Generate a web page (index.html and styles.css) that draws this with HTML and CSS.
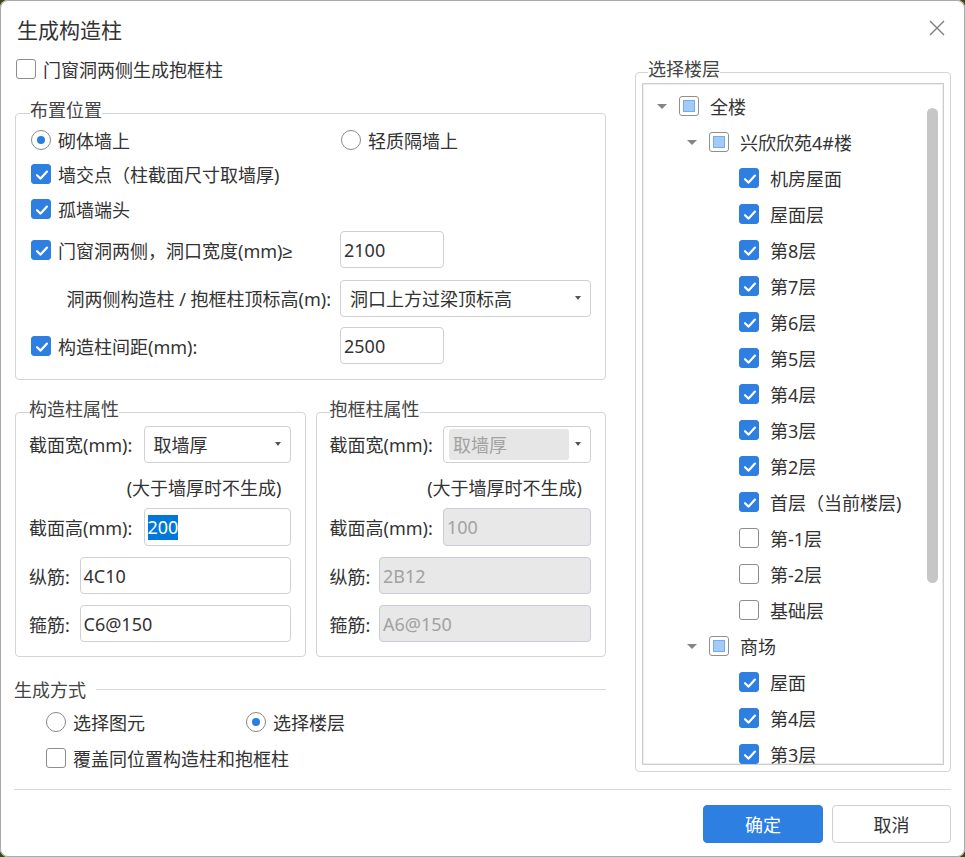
FILE: index.html
```html
<!DOCTYPE html>
<html lang="zh-CN">
<head>
<meta charset="utf-8">
<title>生成构造柱</title>
<link rel="stylesheet" href="styles.css">
</head>
<body>
<div class="dialog">
  <header class="titlebar">
    <h1 class="title">生成构造柱</h1>
    <span class="close"><svg width="16" height="16" viewBox="0 0 16 16"><path d="M1 1L15 15M15 1L1 15" stroke="#7d7d7d" stroke-width="1.4" fill="none"/></svg></span>
  </header>

  <div class="content">
    <div class="left">
      <div class="opt top-check"><span class="cb"></span><span>门窗洞两侧生成抱框柱</span></div>

      <fieldset class="group place">
        <legend>布置位置</legend>
        <div class="place-grid">
          <div class="opt"><span class="radio on"></span><span>砌体墙上</span></div>
          <div class="opt"><span class="radio"></span><span>轻质隔墙上</span></div>

          <div class="opt span2"><span class="cb on"><svg viewBox="0 0 20 20"><path d="M5 10.2L8.6 13.6L15 6.6"/></svg></span><span>墙交点（柱截面尺寸取墙厚)</span></div>

          <div class="opt span2"><span class="cb on"><svg viewBox="0 0 20 20"><path d="M5 10.2L8.6 13.6L15 6.6"/></svg></span><span>孤墙端头</span></div>

          <div class="opt"><span class="cb on"><svg viewBox="0 0 20 20"><path d="M5 10.2L8.6 13.6L15 6.6"/></svg></span><span>门窗洞两侧，洞口宽度(mm)<span class="ge">≥</span></span></div>
          <div class="field w-104">2100</div>

          <div class="rlabel">洞两侧构造柱 / 抱框柱顶标高(m):</div>
          <div class="select"><span>洞口上方过梁顶标高</span><span class="caret"></span></div>

          <div class="opt"><span class="cb on"><svg viewBox="0 0 20 20"><path d="M5 10.2L8.6 13.6L15 6.6"/></svg></span><span>构造柱间距(mm):</span></div>
          <div class="field w-104">2500</div>
        </div>
      </fieldset>

      <div class="props">
        <fieldset class="group prop">
          <legend>构造柱属性</legend>
          <div class="prow r-first"><span>截面宽(mm):</span><div class="select w-147"><span>取墙厚</span><span class="caret"></span></div></div>
          <div class="note">(大于墙厚时不生成)</div>
          <div class="prow r-mid"><span>截面高(mm):</span><div class="field w-147"><span class="sel">200</span></div></div>
          <div class="prow r-next"><span>纵筋:</span><div class="field w-211">4C10</div></div>
          <div class="prow r-next"><span>箍筋:</span><div class="field w-211">C6@150</div></div>
        </fieldset>
        <fieldset class="group prop">
          <legend>抱框柱属性</legend>
          <div class="prow r-first"><span>截面宽(mm):</span><div class="select disabled w-148"><span class="select-value">取墙厚</span><span class="caret"></span></div></div>
          <div class="note">(大于墙厚时不生成)</div>
          <div class="prow r-mid"><span>截面高(mm):</span><div class="field disabled w-148">100</div></div>
          <div class="prow r-next"><span>纵筋:</span><div class="field disabled w-212">2B12</div></div>
          <div class="prow r-next"><span>箍筋:</span><div class="field disabled w-212">A6@150</div></div>
        </fieldset>
      </div>

      <div class="mode">
        <div class="mode-title"><span>生成方式</span></div>
        <div class="mode-row">
          <div class="opt mode-opt"><span class="radio"></span><span>选择图元</span></div>
          <div class="opt mode-opt"><span class="radio on"></span><span>选择楼层</span></div>
        </div>
        <div class="mode-row">
          <div class="opt"><span class="cb"></span><span>覆盖同位置构造柱和抱框柱</span></div>
        </div>
      </div>
    </div>

    <div class="right">
      <fieldset class="group floors">
        <legend>选择楼层</legend>
        <div class="tree">
          <ul class="tree-list">
            <li class="node lv0"><span class="arrow"></span><span class="cb partial"></span><span>全楼</span></li>
            <li class="node lv1"><span class="arrow"></span><span class="cb partial"></span><span>兴欣欣苑4#楼</span></li>
            <li class="node lv2"><span class="leaf"></span><span class="cb on"><svg viewBox="0 0 20 20"><path d="M5 10.2L8.6 13.6L15 6.6"/></svg></span><span>机房屋面</span></li>
            <li class="node lv2"><span class="leaf"></span><span class="cb on"><svg viewBox="0 0 20 20"><path d="M5 10.2L8.6 13.6L15 6.6"/></svg></span><span>屋面层</span></li>
            <li class="node lv2"><span class="leaf"></span><span class="cb on"><svg viewBox="0 0 20 20"><path d="M5 10.2L8.6 13.6L15 6.6"/></svg></span><span>第8层</span></li>
            <li class="node lv2"><span class="leaf"></span><span class="cb on"><svg viewBox="0 0 20 20"><path d="M5 10.2L8.6 13.6L15 6.6"/></svg></span><span>第7层</span></li>
            <li class="node lv2"><span class="leaf"></span><span class="cb on"><svg viewBox="0 0 20 20"><path d="M5 10.2L8.6 13.6L15 6.6"/></svg></span><span>第6层</span></li>
            <li class="node lv2"><span class="leaf"></span><span class="cb on"><svg viewBox="0 0 20 20"><path d="M5 10.2L8.6 13.6L15 6.6"/></svg></span><span>第5层</span></li>
            <li class="node lv2"><span class="leaf"></span><span class="cb on"><svg viewBox="0 0 20 20"><path d="M5 10.2L8.6 13.6L15 6.6"/></svg></span><span>第4层</span></li>
            <li class="node lv2"><span class="leaf"></span><span class="cb on"><svg viewBox="0 0 20 20"><path d="M5 10.2L8.6 13.6L15 6.6"/></svg></span><span>第3层</span></li>
            <li class="node lv2"><span class="leaf"></span><span class="cb on"><svg viewBox="0 0 20 20"><path d="M5 10.2L8.6 13.6L15 6.6"/></svg></span><span>第2层</span></li>
            <li class="node lv2"><span class="leaf"></span><span class="cb on"><svg viewBox="0 0 20 20"><path d="M5 10.2L8.6 13.6L15 6.6"/></svg></span><span>首层（当前楼层)</span></li>
            <li class="node lv2"><span class="leaf"></span><span class="cb"></span><span>第-1层</span></li>
            <li class="node lv2"><span class="leaf"></span><span class="cb"></span><span>第-2层</span></li>
            <li class="node lv2"><span class="leaf"></span><span class="cb"></span><span>基础层</span></li>
            <li class="node lv1"><span class="arrow"></span><span class="cb partial"></span><span>商场</span></li>
            <li class="node lv2"><span class="leaf"></span><span class="cb on"><svg viewBox="0 0 20 20"><path d="M5 10.2L8.6 13.6L15 6.6"/></svg></span><span>屋面</span></li>
            <li class="node lv2"><span class="leaf"></span><span class="cb on"><svg viewBox="0 0 20 20"><path d="M5 10.2L8.6 13.6L15 6.6"/></svg></span><span>第4层</span></li>
            <li class="node lv2"><span class="leaf"></span><span class="cb on"><svg viewBox="0 0 20 20"><path d="M5 10.2L8.6 13.6L15 6.6"/></svg></span><span>第3层</span></li>
          </ul>
          <div class="scroll"><div class="thumb"></div></div>
        </div>
      </fieldset>
    </div>
  </div>

  <footer class="footer">
    <button class="btn primary" type="button">确定</button>
    <button class="btn" type="button">取消</button>
  </footer>
</div>
</body>
</html>
```

FILE: styles.css
```css
html {
  background: #44421b;
}
body {
  margin: 0;
  font-family: "Noto Sans", "Noto Sans CJK SC", sans-serif;
  font-size: 18px;
  color: #333;
}
.dialog {
  width: 965px;
  height: 857px;
  background: #fff;
  border-radius: 8px;
  box-shadow: inset 0 0 0 1px #a9a9a9;
  box-sizing: border-box;
  overflow: hidden;
}

/* title bar */
.titlebar {
  height: 40px;
  padding: 10px 20px 0 17px;
  display: flex;
  align-items: center;
  justify-content: space-between;
}
.title {
  margin: 0;
  font-size: 21px;
  font-weight: normal;
  line-height: 38px;
  color: #333;
}
.close {
  display: flex;
  margin-bottom: 4px;
}

/* main */
.content {
  height: 739px;
  padding: 0 14px 0 15px;
  display: flex;
  align-items: flex-start;
  gap: 29px;
}
.left {
  width: 591px;
  flex: none;
}
.right {
  width: 316px;
  flex: none;
  margin-top: 9px;
}

/* controls */
.opt {
  display: flex;
  align-items: center;
  white-space: nowrap;
}
.ge {
  font-family: "Liberation Sans", sans-serif;
}
.cb {
  width: 20px;
  height: 20px;
  box-sizing: border-box;
  border: 1px solid #8d8d8d;
  border-radius: 3px;
  background: #fff;
  flex: none;
  margin-right: 7px;
  display: grid;
  place-items: center;
}
.cb.on {
  background: #2d7fe1;
  border-color: #2d7fe1;
}
.cb svg {
  width: 20px;
  height: 20px;
}
.cb svg path {
  fill: none;
  stroke: #fff;
  stroke-width: 2.2;
  stroke-linecap: round;
  stroke-linejoin: round;
}
.cb.partial {
  border-color: #8f8f8f;
}
.cb.partial::after {
  content: "";
  width: 12px;
  height: 12px;
  box-sizing: border-box;
  background: #a3cbfa;
  border: 1px solid #76aced;
}
.radio {
  width: 20px;
  height: 20px;
  box-sizing: border-box;
  border: 1px solid #8a8a8a;
  border-radius: 50%;
  background: #fff;
  flex: none;
  margin-right: 7px;
  display: grid;
  place-items: center;
}
.radio.on::after {
  content: "";
  width: 8px;
  height: 8px;
  border-radius: 50%;
  background: #2a7de1;
}
.field {
  height: 37px;
  box-sizing: border-box;
  border: 1px solid #d0d0d0;
  border-radius: 4px;
  background: #fff;
  padding-left: 3px;
  display: flex;
  align-items: center;
  color: #333;
}
.field.disabled {
  background: #e8e8e8;
  border-color: #cacdd8;
  color: #a2a2a2;
}
.sel {
  background: #0078d7;
  color: #fff;
  line-height: 25px;
}
.select {
  height: 37px;
  box-sizing: border-box;
  border: 1px solid #d0d0d0;
  border-radius: 4px;
  background: #fff;
  padding: 0 9px 0 9px;
  display: flex;
  align-items: center;
  justify-content: space-between;
}
.select.disabled {
  padding: 2px 9px 2px 5px;
}
.select-value {
  width: 120px;
  height: 100%;
  box-sizing: border-box;
  background: #e6e6e6;
  border-radius: 3px;
  padding-left: 4px;
  display: flex;
  align-items: center;
  color: #a2a2a2;
}
.caret {
  width: 0;
  height: 0;
  border-left: 3.5px solid transparent;
  border-right: 3.5px solid transparent;
  border-top: 4px solid #555;
}
.w-104 { width: 104px; }
.w-147 { width: 147px; }
.w-148 { width: 148px; }
.w-211 { width: 211px; }
.w-212 { width: 212px; }

/* groups */
.group {
  margin: 0;
  border: 1px solid #d4d4d4;
  border-radius: 4px;
  min-width: 0;
}
.group legend {
  padding: 0 0 6px;
  font-size: 18px;
  line-height: 20px;
  color: #444;
}

.top-check {
  height: 38px;
  padding-left: 1px;
}

.place {
  margin-top: 12px;
  padding: 0 14px 9px 14px;
}
.place-grid {
  display: grid;
  grid-template-columns: 310px 251px;
  grid-template-rows: 28px 40px 30px 51px 46px 49px;
  align-items: center;
}
.place-grid .opt {
  padding-left: 1px;
}
.span2 {
  grid-column: 1 / 3;
}
.rlabel {
  text-align: right;
  padding-right: 9px;
  white-space: nowrap;
}

.props {
  display: flex;
  gap: 10px;
  margin-top: 19px;
}
.prop {
  flex: 1;
  padding: 0 14px 14px 13px;
}
.prow {
  display: flex;
  align-items: center;
  justify-content: space-between;
  white-space: nowrap;
}
.r-first { height: 38px; }
.r-mid { height: 38px; }
.r-mid .field { height: 38px; }
.r-next { height: 37px; margin-top: 11px; }
.note {
  height: 45px;
  box-sizing: border-box;
  padding: 3px 9px 0 0;
  display: flex;
  align-items: center;
  justify-content: flex-end;
  white-space: nowrap;
}

/* mode */
.mode {
  margin-top: 21px;
}
.mode-title {
  height: 22px;
  display: flex;
  align-items: center;
  margin-left: -1px;
  color: #444;
}
.mode-title::after {
  content: "";
  flex: 1;
  height: 1px;
  background: #d6d6d6;
  margin-left: 10px;
}
.mode-row {
  height: 36px;
  display: flex;
  align-items: center;
  padding-left: 31px;
}
.mode-title + .mode-row {
  margin-top: 4px;
}
.mode-opt {
  width: 200px;
}

/* floors tree */
.floors {
  padding: 0 6px 6px 6px;
}
.floors legend {
  margin-left: 6px;
}
.tree {
  margin-top: -2px;
  height: 682px;
  box-sizing: border-box;
  border: 1px solid #cdcdcd;
  box-shadow: inset 0 0 0 1px #ededed;
  display: flex;
  overflow: hidden;
}
.tree-list {
  list-style: none;
  margin: 0;
  padding: 4px 0 0;
  flex: 1;
  overflow: hidden;
}
.node {
  height: 36px;
  display: flex;
  align-items: center;
  white-space: nowrap;
}
.node .cb {
  margin-right: 11px;
}
.lv0 { padding-left: 11px; }
.lv1 { padding-left: 41px; }
.lv2 { padding-left: 71px; }
.arrow,
.leaf {
  width: 16px;
  height: 16px;
  flex: none;
  margin-right: 9px;
  display: grid;
  place-items: center;
}
.arrow::after {
  content: "";
  width: 0;
  height: 0;
  border-left: 5px solid transparent;
  border-right: 5px solid transparent;
  border-top: 5px solid #858585;
}
.scroll {
  width: 11px;
  flex: none;
  margin-right: 5px;
}
.thumb {
  margin-top: 24px;
  height: 475px;
  border-radius: 6px;
  background: #c6c6c6;
}

/* footer */
.footer {
  margin: 0 14px;
  border-top: 1px solid #d9d9d9;
  padding-top: 15px;
  display: flex;
  justify-content: flex-end;
  gap: 9px;
}
.btn {
  width: 119px;
  height: 38px;
  border: 1px solid #cfcfcf;
  border-radius: 4px;
  background: #fff;
  font-family: "Noto Sans", "Noto Sans CJK SC", sans-serif;
  font-size: 18px;
  color: #333;
  padding: 0;
}
.btn.primary {
  width: 120px;
  background: #2d7fe1;
  border-color: #2d7fe1;
  color: #fff;
}
```
